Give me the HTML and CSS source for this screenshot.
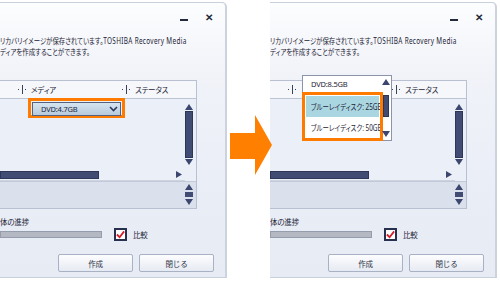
FILE: index.html
```html
<!DOCTYPE html>
<html lang="ja">
<head>
    <meta charset="UTF-8">
    <title>リカバリーメディア作成</title>
    <link rel="stylesheet" href="styles.css">
</head>
<body>
<div class="stage">

    <!-- vorher: Auswahlfeld geschlossen -->
    <div class="shot">
        <div class="win">
            <div class="titlebar">
                <span class="btn-min"></span>
                <span class="btn-close">&#x2715;</span>
            </div>
            <div class="desc">
                <p>リカバリイメージが保存されています。<span class="latin">TOSHIBA Recovery Media</span></p>
                <p>ディアを作成することができます。</p>
            </div>
            <div class="table">
                <div class="thead">
                    <div class="col col-media"><span class="split"><i></i></span>メディア</div>
                    <div class="col"><span class="split"><i></i></span>ステータス</div>
                </div>
                <div class="tbody">
                    <div class="cell">
                        <div class="mark combo-mark">
                            <div class="combo">
                                <span>DVD:4.7GB</span>
                                <svg class="chev" width="9" height="6" viewBox="0 0 9 6"><path d="M1 1 L4.5 4.5 L8 1" fill="none" stroke="#2e3a5c" stroke-width="1.6"/></svg>
                            </div>
                        </div>
                    </div>
                    <div class="vscroll">
                        <svg width="8" height="6" viewBox="0 0 8 6"><polygon points="4,0 8,6 0,6" fill="#3c4770"/></svg>
                        <div class="vthumb"></div>
                        <svg width="8" height="6" viewBox="0 0 8 6"><polygon points="0,0 8,0 4,6" fill="#3c4770"/></svg>
                    </div>
                    <div class="hscroll">
                        <div class="hthumb"></div>
                        <svg width="6" height="7" viewBox="0 0 6 7"><polygon points="0,0 6,3.5 0,7" fill="#3c4770"/></svg>
                    </div>
                </div>
                <div class="tfoot">
                    <div class="spin">
                        <svg width="8" height="6" viewBox="0 0 8 6"><polygon points="4,0 8,6 0,6" fill="#3c4770"/></svg>
                        <div class="spin-box"></div>
                        <svg width="8" height="6" viewBox="0 0 8 6"><polygon points="0,0 8,0 4,6" fill="#3c4770"/></svg>
                    </div>
                </div>
            </div>
            <div class="progress-label">体の進捗</div>
            <div class="progress-row">
                <div class="progress"></div>
                <span class="check"><svg width="10" height="9" viewBox="0 0 10 9"><path d="M1 4.5 L4 7.5 L9 1" fill="none" stroke="#d11f2c" stroke-width="2"/></svg></span>
                <span>比較</span>
            </div>
            <div class="buttons">
                <button>作成</button>
                <button>閉じる</button>
            </div>
        </div>
    </div>

    <div class="gap">
        <svg class="arrow" width="48" height="62" viewBox="0 0 48 62">
            <polygon points="3,18 28,18 28,0 45,30 28,60 28,44 3,44" fill="#ff8000"/>
        </svg>
    </div>

    <!-- nachher: Liste geöffnet -->
    <div class="shot">
        <div class="win">
            <div class="titlebar">
                <span class="btn-min"></span>
                <span class="btn-close">&#x2715;</span>
            </div>
            <div class="desc">
                <p>リカバリイメージが保存されています。<span class="latin">TOSHIBA Recovery Media</span></p>
                <p>ディアを作成することができます。</p>
            </div>
            <div class="table">
                <div class="thead">
                    <div class="col col-media"><span class="split"><i></i></span></div>
                    <div class="col"><span class="split"><i></i></span>ステータス</div>
                </div>
                <div class="tbody">
                    <div class="cell"></div>
                    <div class="vscroll">
                        <svg width="8" height="6" viewBox="0 0 8 6"><polygon points="4,0 8,6 0,6" fill="#3c4770"/></svg>
                        <div class="vthumb"></div>
                        <svg width="8" height="6" viewBox="0 0 8 6"><polygon points="0,0 8,0 4,6" fill="#3c4770"/></svg>
                    </div>
                    <div class="hscroll">
                        <div class="hthumb"></div>
                        <svg width="6" height="7" viewBox="0 0 6 7"><polygon points="0,0 6,3.5 0,7" fill="#3c4770"/></svg>
                    </div>
                </div>
                <div class="tfoot">
                    <div class="spin">
                        <svg width="8" height="6" viewBox="0 0 8 6"><polygon points="4,0 8,6 0,6" fill="#3c4770"/></svg>
                        <div class="spin-box"></div>
                        <svg width="8" height="6" viewBox="0 0 8 6"><polygon points="0,0 8,0 4,6" fill="#3c4770"/></svg>
                    </div>
                </div>
            </div>
            <div class="progress-label">体の進捗</div>
            <div class="progress-row">
                <div class="progress"></div>
                <span class="check"><svg width="10" height="9" viewBox="0 0 10 9"><path d="M1 4.5 L4 7.5 L9 1" fill="none" stroke="#d11f2c" stroke-width="2"/></svg></span>
                <span>比較</span>
            </div>
            <div class="buttons">
                <button>作成</button>
                <button>閉じる</button>
            </div>

            <!-- aufgeklappte Liste -->
            <div class="droplist">
                <div class="items">
                    <div class="item item-top">DVD:8.5GB</div>
                    <div class="mark list-mark">
                        <div class="item item-sel"><span>ブルーレイディスク: 25GB</span></div>
                        <div class="item"><span>ブルーレイディスク: 50GB</span></div>
                    </div>
                </div>
                <div class="list-scroll">
                    <svg width="8" height="6" viewBox="0 0 8 6"><polygon points="4,0 8,6 0,6" fill="#3c4770"/></svg>
                    <div class="list-thumb"></div>
                    <svg width="8" height="6" viewBox="0 0 8 6"><polygon points="0,0 8,0 4,6" fill="#3c4770"/></svg>
                </div>
            </div>
        </div>
    </div>

</div>
</body>
</html>
```

FILE: styles.css
```css
/* Grundlayout */
body {
    margin: 0;
    background: #fff;
    font-family: "Noto Sans", "Noto Sans CJK JP", sans-serif;
    font-size: 7.5px;
    letter-spacing: -0.2px;
    color: #1d2335;
    font-feature-settings: "palt";
}

p {
    margin: 0;
}

.stage {
    display: flex;
    width: 500px;
    height: 282px;
    overflow: hidden;
}

.shot {
    flex: none;
    width: 227px;
    padding-top: 2px;
    overflow: hidden;
}

.gap {
    flex: none;
    width: 43px;
    position: relative;
    z-index: 2;
}

.arrow {
    position: absolute;
    left: 0;
    top: 115px;
    overflow: visible;
}

/* Fenster */
.win {
    position: relative;
    box-sizing: border-box;
    height: 276px;
    border-top: 1px solid #c9cfdc;
    border-right: 2px solid #ccd2de;
    border-bottom: 1px solid #c9cfdc;
    border-top-right-radius: 5px;
    background: linear-gradient(#fcfdfe, #f1f3f9 70px, #e9edf6 200px, #e7ebf4);
    display: flex;
    flex-direction: column;
}

.titlebar {
    height: 32px;
    display: flex;
    justify-content: flex-end;
    align-items: center;
    gap: 17px;
    padding-right: 12px;
}

.btn-min {
    width: 8px;
    height: 2px;
    background: #222a3b;
    margin-top: 1px;
}

.btn-close {
    font-size: 10px;
    font-weight: bold;
    color: #222a3b;
    line-height: 1;
    margin-top: -4px;
}

.desc {
    line-height: 11px;
    white-space: nowrap;
    font-size: 8px;
    letter-spacing: 0;
    transform: scaleX(0.8);
    transform-origin: left center;
}

.desc .latin {
    letter-spacing: 0.4px;
}

/* Tabelle */
.table {
    margin-top: 23px;
    width: 197px;
    box-sizing: border-box;
    border: 1px solid #b9c0d1;
    border-left: none;
    display: flex;
    flex-direction: column;
}

.thead {
    height: 17px;
    border-bottom: 1px solid #bcc3d3;
    background: #f5f7fb;
    display: flex;
    align-items: center;
    padding-left: 18px;
}

.col {
    display: flex;
    align-items: center;
    gap: 5px;
}

.col-media {
    width: 104px;
}

.split {
    width: 8px;
    height: 9px;
    display: flex;
    justify-content: center;
    background: radial-gradient(circle at 0.5px 50%, #3a4257 0.8px, transparent 1px),
                radial-gradient(circle at 7.5px 50%, #3a4257 0.8px, transparent 1px);
}

.split i {
    width: 1px;
    background: #3a4257;
}

.tbody {
    height: 82px;
    background: #ebeff7;
    display: grid;
    grid-template-columns: 1fr 11px;
    grid-template-rows: 1fr 12px;
}

.cell {
    padding-left: 28px;
}

.mark {
    box-sizing: border-box;
    border: 3px solid #ff7b00;
}

.combo-mark {
    width: 97px;
    height: 20px;
    margin-top: -1px;
    padding: 1px;
}

.combo {
    height: 12px;
    border: 1px solid #56617f;
    background: linear-gradient(#d6e4f0, #b7cbde);
    display: flex;
    align-items: center;
    justify-content: space-between;
    padding: 0 2px 0 8px;
    color: #1e2840;
}

.vscroll {
    padding-top: 5px;
    display: flex;
    flex-direction: column;
    gap: 1px;
}

.vthumb {
    width: 8px;
    height: 47px;
    box-sizing: border-box;
    background: #414c74;
    border: 1px solid #2d3656;
}

.hscroll {
    display: flex;
    align-items: center;
    justify-content: space-between;
    padding-right: 3px;
    border-bottom: 1px solid #cdd3e0;
}

.hthumb {
    width: 99px;
    height: 8px;
    box-sizing: border-box;
    background: #414c74;
    border: 1px solid #2d3656;
}

.tfoot {
    height: 26px;
    border-top: 1px solid #c3c9d7;
    background: #dbe0ed;
    display: flex;
    justify-content: flex-end;
    padding-right: 3px;
}

.spin {
    display: flex;
    flex-direction: column;
    align-items: center;
    gap: 2px;
    padding-top: 2px;
}

.spin-box {
    width: 8px;
    height: 5px;
    background: #414c74;
}

/* Fortschritt */
.progress-label {
    margin-top: 8px;
    line-height: 11px;
}

.progress-row {
    display: flex;
    align-items: center;
    height: 13px;
}

.progress {
    width: 102px;
    height: 7px;
    box-sizing: border-box;
    background: #b3b8c3;
    border: 1px solid #959cab;
    margin-right: 12px;
}

.check {
    width: 13px;
    height: 13px;
    box-sizing: border-box;
    border: 2px solid #27304f;
    background: #fff;
    display: flex;
    align-items: center;
    justify-content: center;
    margin-right: 6px;
}

.buttons {
    display: flex;
    gap: 6px;
    margin-top: 13px;
    padding-left: 58px;
}

.buttons button {
    width: 75px;
    height: 18px;
    border: 1px solid #a9b1c4;
    border-radius: 2px;
    background: linear-gradient(#fdfdfe, #e6eaf2);
    font-family: inherit;
    font-size: 7.5px;
    letter-spacing: inherit;
    color: #2a3145;
    padding: 0;
}

/* aufgeklappte Liste */
.droplist {
    position: absolute;
    left: 32px;
    top: 72px;
    width: 90px;
    height: 66px;
    box-sizing: border-box;
    border: 1px solid #8c94a8;
    background: #fff;
    display: flex;
    z-index: 1;
}

.items {
    width: 80px;
    margin-left: -1px;
}

.item {
    height: 21px;
    line-height: 21px;
    padding-left: 8px;
    white-space: nowrap;
}

.item span {
    display: inline-block;
    font-size: 8px;
    letter-spacing: 0;
    transform: scaleX(0.8);
    transform-origin: left center;
}

.item-top {
    height: 16px;
    line-height: 16px;
    padding-left: 9px;
}

.list-mark {
    width: 81px;
    height: 49px;
    padding: 1px;
    overflow: hidden;
}

.list-mark .item {
    padding-left: 5px;
}

.item-sel {
    background: #aad6e2;
}

.list-scroll {
    display: flex;
    flex-direction: column;
    align-items: center;
    padding-top: 3px;
    gap: 2px;
}

.list-scroll svg:last-child {
    margin-top: 12px;
}

.list-thumb {
    width: 6px;
    height: 22px;
    margin-top: 8px;
    background: #414c74;
    border: 1px solid #2d3656;
    box-sizing: border-box;
}
```
